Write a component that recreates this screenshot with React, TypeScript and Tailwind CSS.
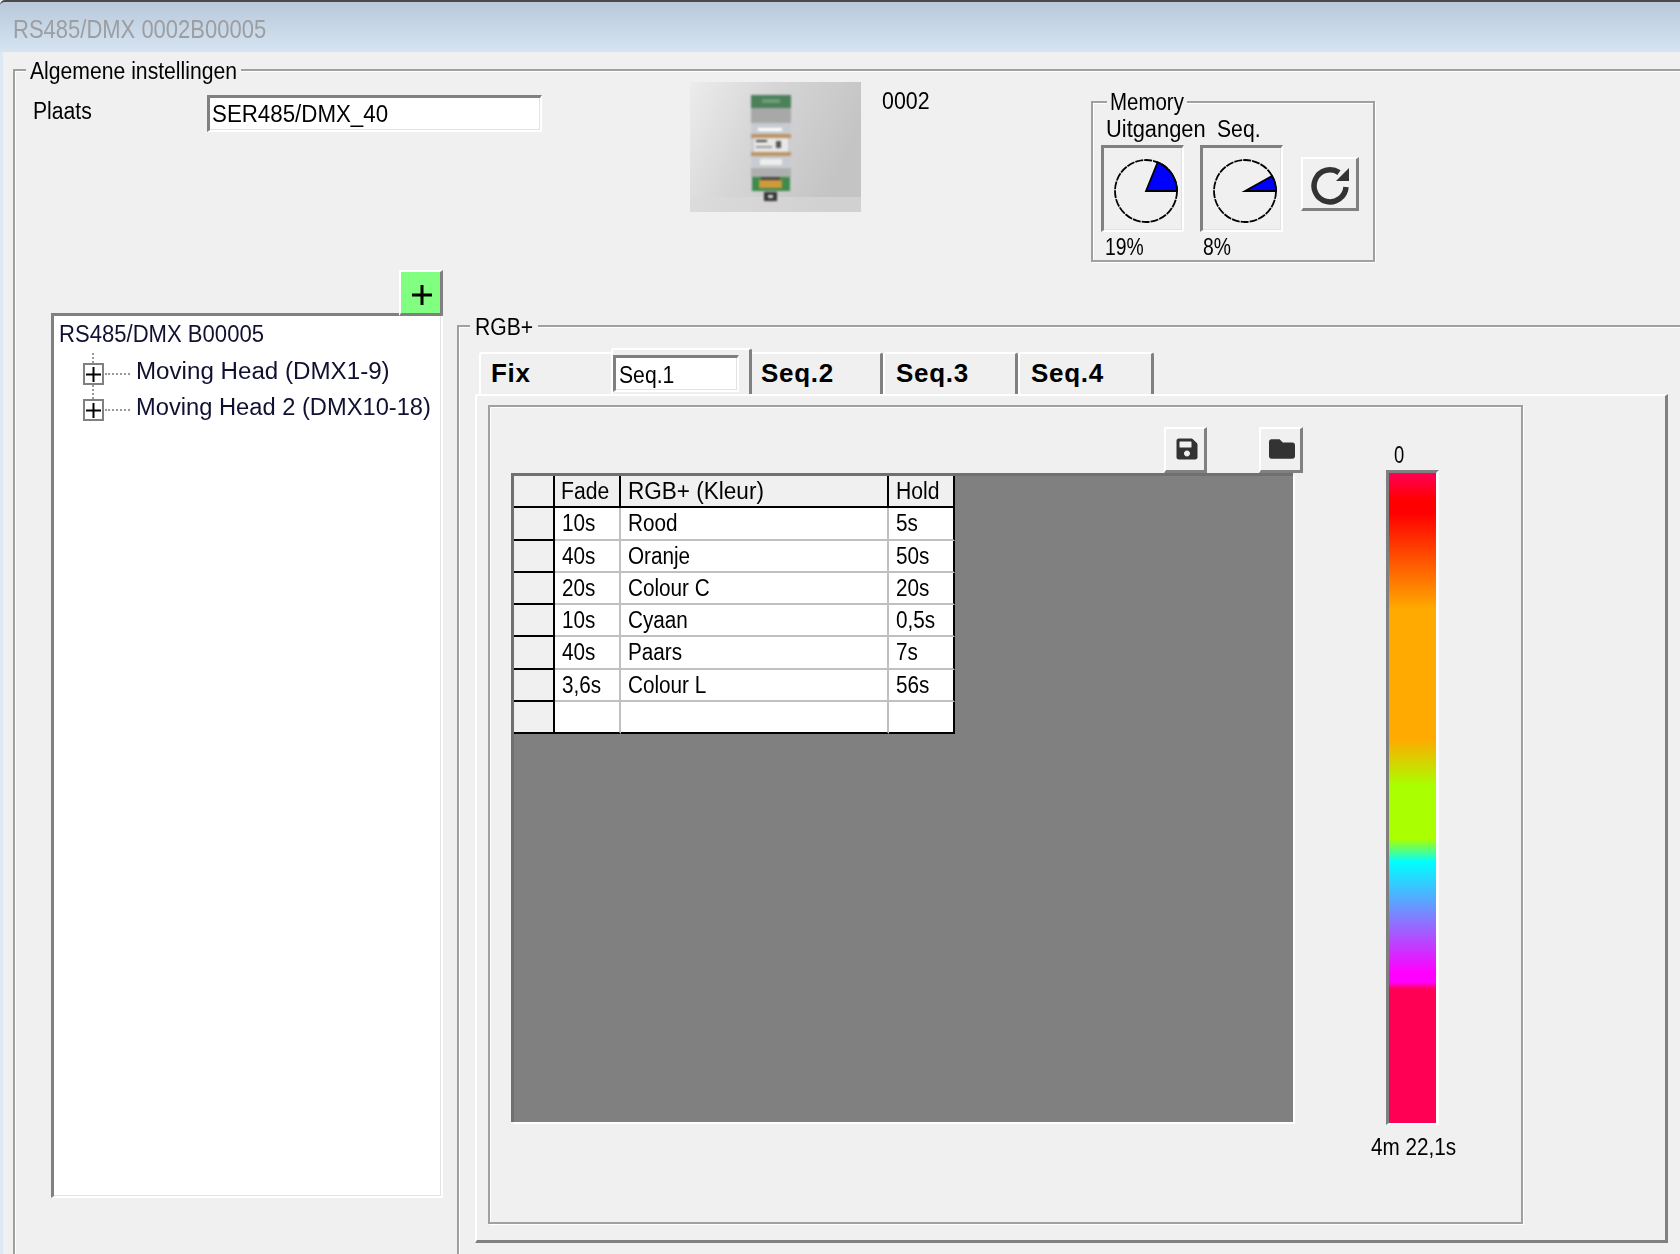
import { FaSave, FaFolder } from 'react-icons/fa'

const SUNKEN =
  'border-t-[3px] border-l-[3px] border-t-[#808080] border-l-[#808080] border-r-2 border-b-2 border-r-white border-b-white shadow-[inset_-1px_-1px_0_#e3e3e3]'
const RAISED =
  'border-t-2 border-l-2 border-t-white border-l-white border-r-[3px] border-b-[3px] border-r-[#808080] border-b-[#808080]'
const ETCHED = 'border-2 border-[#a0a0a0] shadow-[inset_1px_1px_0_#fff,1px_1px_0_#fff]'
const TEXT = 'block whitespace-nowrap text-[23px] leading-none origin-left'
const TAB_TEXT = 'block text-[26px] leading-none font-bold tracking-[0.7px]'

const ROWS = [
  ['10s', 'Rood', '5s'],
  ['40s', 'Oranje', '50s'],
  ['20s', 'Colour C', '20s'],
  ['10s', 'Cyaan', '0,5s'],
  ['40s', 'Paars', '7s'],
  ['3,6s', 'Colour L', '56s'],
  ['', '', '']
]

function Pie({ x, y }: { x: number; y: number }) {
  return (
    <div className={`h-[87px] w-[83px] ${SUNKEN}`}>
      <svg viewBox="0 0 78 82" className="block h-full w-full">
        <circle cx="42" cy="43" r="31" fill="none" stroke="#000" strokeWidth="1.8" strokeDasharray="8 1" />
        <path d={`M42 43H73A31 31 0 0 0 ${x} ${y}Z`} fill="#0000ff" stroke="#000" strokeWidth="1.8" />
      </svg>
    </div>
  )
}

function TreeItem({ label, lineTop, lineHeight, scale }: { label: string; lineTop: string; lineHeight: string; scale: string }) {
  return (
    <div className="relative ml-[29px] flex h-[36px] items-center">
      <div className={`absolute left-[9px] w-0 border-l-2 border-dotted border-[#9a9a9a] ${lineTop} ${lineHeight}`} />
      <div className="flex h-[22px] w-[21px] items-center justify-center border-2 border-[#808080] bg-white">
        <svg width="15" height="15" viewBox="0 0 15 15">
          <path d="M0 7.5H15M7.5 0V15" stroke="#000" strokeWidth="2" />
        </svg>
      </div>
      <div className="ml-[1px] w-[25px] border-t-2 border-dotted border-[#9a9a9a]" />
      <span className={`mb-[6px] ml-[6px] ${TEXT} ${scale} text-[#101030]`}>{label}</span>
    </div>
  )
}

function Device() {
  return (
    <svg viewBox="0 0 171 130" className="h-[130px] w-[171px] shrink-0">
      <defs>
        <linearGradient id="devbg" x1="0" y1="0" x2="1" y2="0.35">
          <stop offset="0" stopColor="#ececec" />
          <stop offset="0.45" stopColor="#d6d6d6" />
          <stop offset="1" stopColor="#c4c4c4" />
        </linearGradient>
      </defs>
      <rect width="171" height="130" fill="url(#devbg)" />
      <rect y="115" width="171" height="15" fill="#dadada" opacity="0.6" />
      <g style={{ filter: 'blur(1px)' }}>
        <rect x="61" y="13" width="40" height="13" fill="#4b8059" />
        <rect x="72" y="17" width="18" height="4" fill="#6f9c7c" />
        <rect x="61" y="26" width="40" height="15" fill="#a8a8a8" />
        <rect x="61" y="41" width="40" height="45" fill="#c8ccd2" />
        <rect x="68" y="46" width="24" height="3" fill="#ffffff" />
        <rect x="61" y="52" width="40" height="4" fill="#bd9464" />
        <rect x="64" y="56" width="34" height="14" fill="#e8e8e8" />
        <rect x="66" y="58" width="11" height="2" fill="#444" />
        <rect x="86" y="59" width="5" height="7" fill="#555" />
        <rect x="66" y="64" width="16" height="2" fill="#999" />
        <rect x="61" y="70" width="40" height="4" fill="#bd9464" />
        <rect x="70" y="77" width="22" height="6" fill="#eeeeee" />
        <rect x="61" y="86" width="40" height="9" fill="#b0b0b0" />
        <rect x="62" y="95" width="38" height="14" fill="#3f8a4c" />
        <rect x="69" y="98" width="23" height="8" fill="#cf9a3c" />
        <rect x="71" y="95" width="19" height="3" fill="#444" />
        <rect x="74" y="110" width="13" height="9" fill="#333" />
        <rect x="78" y="113" width="5" height="3" fill="#ddd" />
      </g>
    </svg>
  )
}

export default function App() {
  return (
    <div className="flex h-[1254px] w-[1680px] flex-col overflow-hidden bg-[#f0f0f0] font-['Liberation_Sans',sans-serif] text-black">
      {/* title bar */}
      <div className="h-[52px] shrink-0 rounded-tl-[5px] border-t-2 border-[#4a4a4a] bg-gradient-to-b from-[#b9c9d9] to-[#d6e4f2] pl-[13px] pt-[15px]">
        <span className={`${TEXT} scale-x-[.88] text-[25px] text-[#9b9ea2]`}>RS485/DMX 0002B00005</span>
      </div>

      <div className="flex-1 border-l-[3px] border-[#dde8f5] pl-[10px] pt-[17px]">
        <div className={`relative h-[1300px] w-[1700px] ${ETCHED}`}>
          <div className="absolute -top-[11px] left-[11px] w-[215px] bg-[#f0f0f0] pl-[4px]">
            <span className={`${TEXT} scale-x-[.92]`}>Algemene instellingen</span>
          </div>

          {/* top row */}
          <div className="flex h-[199px] items-start">
            <span className={`ml-[18px] mt-[29px] w-[174px] shrink-0 ${TEXT} scale-x-[.92]`}>Plaats</span>
            <div className={`mt-[24px] h-[37px] w-[335px] shrink-0 bg-white pl-[2px] pt-[5px] ${SUNKEN}`}>
              <span className={`${TEXT} scale-x-[.97]`}>SER485/DMX_40</span>
            </div>
            <div className="ml-[148px] mt-[11px] shrink-0">
              <Device />
            </div>
            <div className="ml-[21px] mt-[19px] w-[209px] shrink-0">
              <span className={`${TEXT} scale-x-[.93]`}>0002</span>
            </div>
            <div className={`relative mt-[30px] h-[161px] w-[284px] shrink-0 ${ETCHED}`}>
              <div className="absolute -top-[12px] left-[14px] w-[80px] bg-[#f0f0f0] pl-[3px]">
                <span className={`${TEXT} scale-x-[.89]`}>Memory</span>
              </div>
              <div className="ml-[13px] mt-[15px] flex">
                <span className={`w-[111px] ${TEXT} scale-x-[.95]`}>Uitgangen</span>
                <span className={`${TEXT} scale-x-[.92]`}>Seq.</span>
              </div>
              <div className="ml-[8px] mt-[4px] flex items-start">
                <Pie x={53.6} y={14.3} />
                <div className="ml-[16px]">
                  <Pie x={69.1} y={28} />
                </div>
                <div className={`ml-[18px] mt-[12px] flex h-[54px] w-[58px] items-center justify-center pt-[4px] ${RAISED}`}>
                  <svg width="40" height="40" viewBox="0 0 40 40" className="blur-[0.4px]">
                    <path d="M29 6.6A16 16 0 1 0 36 21" fill="none" stroke="#333" strokeWidth="5.5" />
                    <path d="M26 15H39V2Z" fill="#333" />
                  </svg>
                </div>
              </div>
              <div className="ml-[12px] mt-[4px] flex">
                <span className={`w-[98px] ${TEXT} scale-x-[.84]`}>19%</span>
                <span className={`${TEXT} scale-x-[.84]`}>8%</span>
              </div>
            </div>
          </div>

          {/* bottom row */}
          <div className="flex items-start">
            <div className="ml-[36px] flex w-[392px] shrink-0 flex-col">
              <div className={`relative z-10 flex h-[46px] w-[44px] items-center justify-center self-end bg-[#80ff80] pl-[2px] pt-[5px] ${RAISED}`}>
                <svg width="20" height="20" viewBox="0 0 20 20">
                  <path d="M0 10H20M10 0V20" stroke="#000" strokeWidth="3" />
                </svg>
              </div>
              <div className={`-mt-[3px] h-[885px] bg-white ${SUNKEN}`}>
                <span className={`ml-[5px] mt-[7px] ${TEXT} scale-x-[.96] text-[#101030]`}>RS485/DMX B00005</span>
                <div className="mt-[10px]">
                  <TreeItem label="Moving Head (DMX1-9)" lineTop="-top-[3px]" lineHeight="h-[10px]" scale="scale-x-[1.05]" />
                  <TreeItem label="Moving Head 2 (DMX10-18)" lineTop="-top-[7px]" lineHeight="h-[14px]" scale="scale-x-[1.03]" />
                </div>
              </div>
            </div>

            <div className={`relative ml-[14px] mt-[55px] h-[1000px] w-[1300px] shrink-0 ${ETCHED}`}>
              <div className="absolute -top-[11px] left-[11px] w-[68px] bg-[#f0f0f0] pl-[5px]">
                <span className={`${TEXT} scale-x-[.92]`}>RGB+</span>
              </div>

              {/* tabs */}
              <div className="ml-[20px] mt-[21px] flex h-[46px] items-end">
                <div className="h-[42px] w-[132px] rounded-tl-[3px] border-l-2 border-t-2 border-white pl-[10px] pt-[6px]">
                  <span className={TAB_TEXT}>Fix</span>
                </div>
                <div className="h-[46px] w-[141px] rounded-t-[3px] border-l-2 border-r-[3px] border-t-2 border-l-white border-r-[#808080] border-t-white pt-[5px]">
                  <div className={`h-[37px] w-[126px] bg-white pl-[3px] pt-[6px] ${SUNKEN}`}>
                    <span className={`${TEXT} scale-x-[.92]`}>Seq.1</span>
                  </div>
                </div>
                <div className="h-[42px] w-[131px] rounded-tr-[3px] border-r-[3px] border-t-2 border-r-[#808080] border-t-white pl-[9px] pt-[6px]">
                  <span className={TAB_TEXT}>Seq.2</span>
                </div>
                <div className="h-[42px] w-[135px] rounded-t-[3px] border-l-2 border-r-[3px] border-t-2 border-l-white border-r-[#808080] border-t-white pl-[11px] pt-[6px]">
                  <span className={TAB_TEXT}>Seq.3</span>
                </div>
                <div className="h-[42px] w-[136px] rounded-t-[3px] border-l-2 border-r-[3px] border-t-2 border-l-white border-r-[#808080] border-t-white pl-[11px] pt-[6px]">
                  <span className={TAB_TEXT}>Seq.4</span>
                </div>
              </div>

              {/* tab page */}
              <div className="ml-[16px] h-[849px] w-[1193px] border-b-[3px] border-l-2 border-r-[3px] border-t-2 border-b-[#808080] border-l-white border-r-[#808080] border-t-white pl-[11px] pt-[9px]">
                <div className={`flex h-[819px] w-[1035px] ${ETCHED}`}>
                  <div className="ml-[21px] mt-[20px] w-[782px] shrink-0">
                    <div className="-mr-[10px] flex h-[46px] justify-end gap-[52px]">
                      <div className={`flex w-[43px] items-center justify-center pb-[2px] pl-[4px] ${RAISED}`}>
                        <FaSave size={24} className="text-[#333]" />
                      </div>
                      <div className={`flex w-[44px] items-center justify-center pb-[2px] pl-[2px] ${RAISED}`}>
                        <FaFolder size={26} className="text-[#333]" />
                      </div>
                    </div>
                    <div className="h-[649px] border-l-[3px] border-t-[3px] border-[#707070] bg-[#808080] shadow-[2px_2px_0_#fff]">
                      <div className="grid h-[258px] w-[441px] grid-cols-[41px_66px_268px_66px] grid-rows-8">
                        <div className="border-b-2 border-r-2 border-black bg-[#f0f0f0]" />
                        <div className="flex items-center border-b-2 border-r-2 border-black bg-[#f0f0f0] pl-[6px] pt-[1px]">
                          <span className={`${TEXT} scale-x-[.92]`}>Fade</span>
                        </div>
                        <div className="flex items-center border-b-2 border-r-2 border-black bg-[#f0f0f0] pl-[7px] pt-[1px]">
                          <span className={`${TEXT} scale-x-[.98]`}>RGB+ (Kleur)</span>
                        </div>
                        <div className="flex items-center border-b-2 border-r-2 border-black bg-[#f0f0f0] pl-[7px] pt-[1px]">
                          <span className={`${TEXT} scale-x-[.92]`}>Hold</span>
                        </div>
                        {ROWS.map((r, i) => (
                          <div key={i} className="contents">
                            <div className="border-b-2 border-r-2 border-black bg-[#f0f0f0]" />
                            <div className={`flex items-center border-b-2 border-r-2 border-r-[#c0c0c0] bg-white pl-[7px] pt-[1px] ${i === 6 ? 'border-b-black' : 'border-b-[#c0c0c0]'}`}>
                              <span className={`${TEXT} scale-x-[.9]`}>{r[0]}</span>
                            </div>
                            <div className={`flex items-center border-b-2 border-r-2 border-r-[#c0c0c0] bg-white pl-[7px] pt-[1px] ${i === 6 ? 'border-b-black' : 'border-b-[#c0c0c0]'}`}>
                              <span className={`${TEXT} scale-x-[.9]`}>{r[1]}</span>
                            </div>
                            <div className={`flex items-center border-b-2 border-r-2 border-r-black bg-white pl-[7px] pt-[1px] ${i === 6 ? 'border-b-black' : 'border-b-[#c0c0c0]'}`}>
                              <span className={`${TEXT} scale-x-[.9]`}>{r[2]}</span>
                            </div>
                          </div>
                        ))}
                      </div>
                    </div>
                  </div>

                  {/* colour bar */}
                  <div className="ml-[78px] mt-[37px] shrink-0">
                    <span className={`ml-[23px] ${TEXT} scale-x-[.8]`}>0</span>
                    <div className="ml-[15px] mt-[3px] h-[655px] w-[53px] border-b-2 border-l-[3px] border-r-[3px] border-t-[3px] border-b-white border-l-[#808080] border-r-white border-t-[#808080] bg-[linear-gradient(to_bottom,#ff0055_0px,#ff0000_28px,#ff0000_40px,#ffaa00_136px,#ffaa00_266px,#aaff00_313px,#aaff00_366px,#00ffff_389px,#ff00ff_499px,#ff00ff_509px,#ff0055_516px,#ff0055_100%)]" />
                    <span className={`mt-[11px] ${TEXT} scale-x-[.9]`}>4m 22,1s</span>
                  </div>
                </div>
              </div>
            </div>
          </div>
        </div>
      </div>
    </div>
  )
}
